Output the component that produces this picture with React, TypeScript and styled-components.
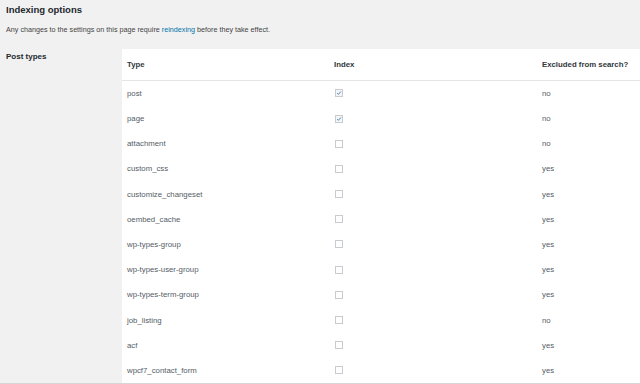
import styled, { createGlobalStyle } from 'styled-components';

interface PostType {
    name: string;
    indexed: boolean;
    excluded: boolean;
}

const postTypes: PostType[] = [
    { name: 'post', indexed: true, excluded: false },
    { name: 'page', indexed: true, excluded: false },
    { name: 'attachment', indexed: false, excluded: false },
    { name: 'custom_css', indexed: false, excluded: true },
    { name: 'customize_changeset', indexed: false, excluded: true },
    { name: 'oembed_cache', indexed: false, excluded: true },
    { name: 'wp-types-group', indexed: false, excluded: true },
    { name: 'wp-types-user-group', indexed: false, excluded: true },
    { name: 'wp-types-term-group', indexed: false, excluded: true },
    { name: 'job_listing', indexed: false, excluded: false },
    { name: 'acf', indexed: false, excluded: true },
    { name: 'wpcf7_contact_form', indexed: false, excluded: true },
];

const GlobalStyle = createGlobalStyle`
    html, body {
        margin: 0;
        background: #f1f1f1;
        font-family: "Liberation Sans", Arial, sans-serif;
        color: #23282d;
    }
`;

const Checkbox = ({ checked }: { checked: boolean }) => (
    <StyledCheckbox $checked={checked}>
        {checked && (
            <svg width="8" height="8" viewBox="0 0 8 8">
                <path
                    d="M1.6 4.2 L3.2 5.8 L6.6 2"
                    fill="none"
                    stroke="#3d79b5"
                    strokeWidth="1.2"
                />
            </svg>
        )}
    </StyledCheckbox>
);

const App = () => {
    return (
        <StyledPage>
            <GlobalStyle />
            <StyledTitle>Indexing options</StyledTitle>
            <StyledDescription>
                Any changes to the settings on this page require{' '}
                <StyledLink href="#">reindexing</StyledLink> before they take
                effect.
            </StyledDescription>
            <StyledSection>
                <StyledSectionLabel>Post types</StyledSectionLabel>
                <StyledPanel>
                    <StyledHeaderRow>
                        <StyledHeaderCell>Type</StyledHeaderCell>
                        <StyledHeaderCell>Index</StyledHeaderCell>
                        <StyledHeaderCell>Excluded from search?</StyledHeaderCell>
                    </StyledHeaderRow>
                    {postTypes.map((type) => (
                        <StyledRow key={type.name}>
                            <StyledCell>{type.name}</StyledCell>
                            <StyledCell>
                                <Checkbox checked={type.indexed} />
                            </StyledCell>
                            <StyledCell>{type.excluded ? 'yes' : 'no'}</StyledCell>
                        </StyledRow>
                    ))}
                </StyledPanel>
            </StyledSection>
        </StyledPage>
    );
};

const StyledPage = styled.div`
    display: flex;
    flex-direction: column;
    width: 640px;
    height: 384px;
    overflow: hidden;
`;

const StyledTitle = styled.h2`
    margin: 0;
    padding: 3px 0 0 6px;
    height: 17px;
    font-size: 9.5px;
    line-height: 14px;
    font-weight: 700;
    color: #23282d;
`;

const StyledDescription = styled.p`
    margin: 0;
    padding: 3px 0 0 6px;
    height: 29px;
    font-size: 7.2px;
    line-height: 16px;
    color: #444;
`;

const StyledLink = styled.a`
    color: #0073aa;
    text-decoration: none;
`;

const StyledSection = styled.div`
    display: flex;
    flex: 1;
    border-bottom: 1px solid #d6d6d6;
`;

const StyledSectionLabel = styled.div`
    width: 122px;
    padding: 2px 0 0 6px;
    box-sizing: border-box;
    font-size: 8px;
    line-height: 12px;
    font-weight: 700;
`;

const StyledPanel = styled.div`
    flex: 1;
    background: #fff;
`;

const StyledGridRow = styled.div`
    display: grid;
    grid-template-columns: 207px 208px 1fr;
    align-items: center;
    padding-left: 5px;
`;

const StyledHeaderRow = styled(StyledGridRow)`
    height: 31px;
    border-bottom: 1px solid #e5e5e5;
`;

const StyledRow = styled(StyledGridRow)`
    height: 25.2px;
`;

const StyledHeaderCell = styled.div`
    font-size: 7.8px;
    font-weight: 700;
    color: #32373c;
`;

const StyledCell = styled.div`
    display: flex;
    align-items: center;
    font-size: 7.8px;
    color: #555d66;
`;

const StyledCheckbox = styled.span<{ $checked: boolean }>`
    display: flex;
    align-items: center;
    justify-content: center;
    width: 8px;
    height: 8px;
    margin-left: 1px;
    border: 1px solid #c8ccd0;
    box-sizing: border-box;
    background: ${({ $checked }) => ($checked ? '#f3f5f6' : '#fff')};
`;

export default App;
